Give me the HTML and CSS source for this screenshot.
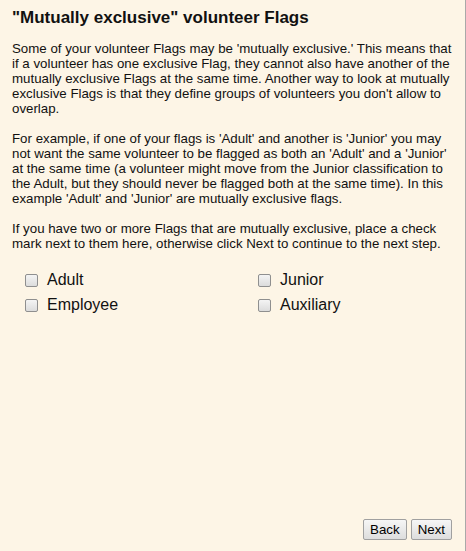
FILE: index.html
```html
<!DOCTYPE html>
<html>
<head>
<meta charset="utf-8">
<link rel="stylesheet" href="styles.css">
</head>
<body>
<div class="page">
  <div class="content">
    <h1 class="title">"Mutually exclusive" volunteer Flags</h1>
    <p class="para">Some of your volunteer Flags may be 'mutually exclusive.' This means that if a volunteer has one exclusive Flag, they cannot also have another of the mutually exclusive Flags at the same time. Another way to look at mutually exclusive Flags is that they define groups of volunteers you don't allow to overlap.</p>
    <p class="para">For example, if one of your flags is 'Adult' and another is 'Junior' you may not want the same volunteer to be flagged as both an 'Adult' and a 'Junior' at the same time (a volunteer might move from the Junior classification to the Adult, but they should never be flagged both at the same time). In this example 'Adult' and 'Junior' are mutually exclusive flags.</p>
    <p class="para">If you have two or more Flags that are mutually exclusive, place a check mark next to them here, otherwise click Next to continue to the next step.</p>
    <div class="flags">
      <label class="flag"><span class="box"></span><span>Adult</span></label>
      <label class="flag"><span class="box"></span><span>Junior</span></label>
      <label class="flag"><span class="box"></span><span>Employee</span></label>
      <label class="flag"><span class="box"></span><span>Auxiliary</span></label>
    </div>
  </div>
  <div class="actions">
    <button class="btn">Back</button>
    <button class="btn">Next</button>
  </div>
</div>
</body>
</html>
```
FILE: styles.css
```css
html, body {
  margin: 0;
  padding: 0;
  height: 100%;
}
body {
  background: #fdf5e6;
  font-family: Arial, "Liberation Sans", sans-serif;
  color: #111;
}
.page {
  box-sizing: border-box;
  height: 551px;
  border-right: 1px solid #a9a9a9;
  width: 466px;
  display: flex;
  flex-direction: column;
  justify-content: space-between;
  padding: 8px 12px 11px 12px;
}
.title {
  margin: 0 0 13px 0;
  font-size: 17px;
  font-weight: bold;
  line-height: 20px;
}
.para {
  margin: 0 0 15px 0;
  font-size: 13.3px;
  line-height: 15px;
}
.flags {
  display: grid;
  grid-template-columns: 233px 1fr;
  row-gap: 9px;
  padding-left: 13px;
  margin-top: 21px;
}
.flag {
  display: flex;
  align-items: center;
  gap: 9px;
  font-size: 16px;
  line-height: 16px;
}
.box {
  box-sizing: border-box;
  width: 13px;
  height: 13px;
  border: 1px solid #8f8f8f;
  border-radius: 2px;
  background: linear-gradient(#f4f4f4, #dcdcdc);
}
.actions {
  display: flex;
  justify-content: flex-end;
  gap: 4px;
  padding-right: 1px;
}
.btn {
  font-family: Arial, "Liberation Sans", sans-serif;
  font-size: 13.3px;
  color: #000;
  height: 21px;
  padding: 0 6px;
  border: 1px solid #a0a0a0;
  border-radius: 2px;
  background: linear-gradient(#f6f6f6, #dddddd);
}
```
